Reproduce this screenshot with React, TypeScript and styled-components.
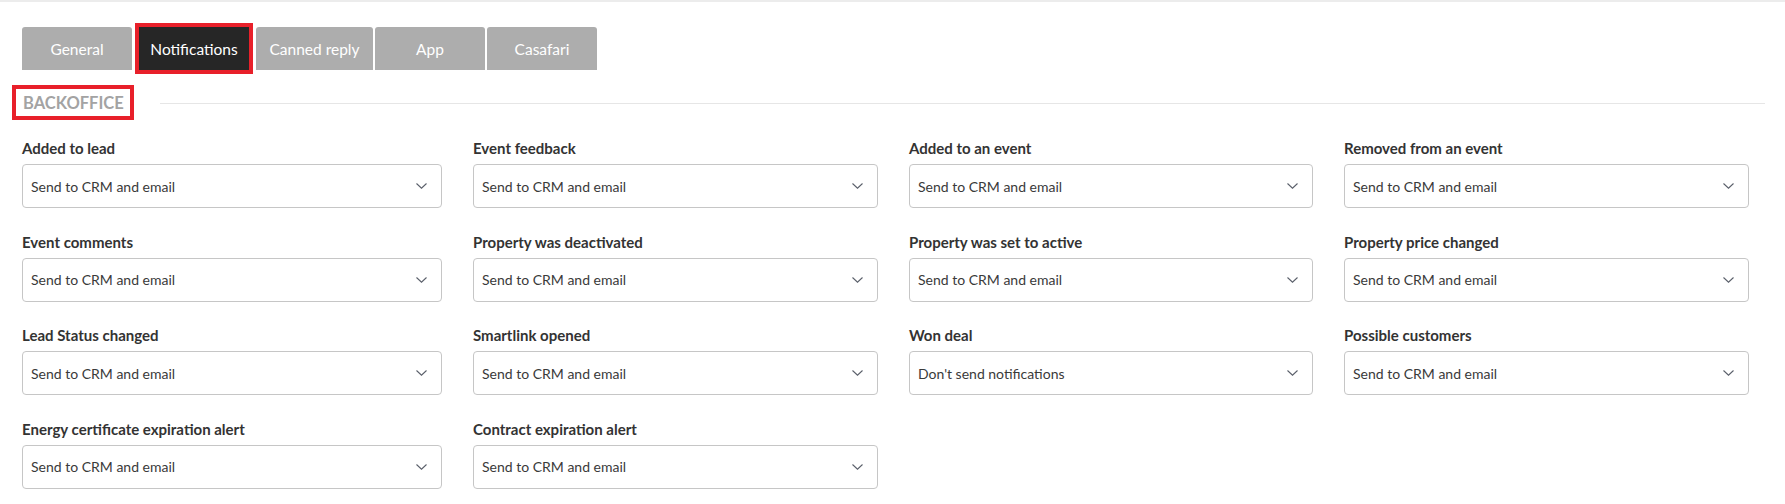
import React, {FC} from 'react';
import styled, {createGlobalStyle} from 'styled-components';

const GlobalStyle = createGlobalStyle`
  html, body {
    margin: 0;
    padding: 0;
    background: #fff;
    font-family: Lato, "Open Sans", "Liberation Sans", sans-serif;
  }
  * {
    box-sizing: border-box;
  }
`

const Page = styled.div`
  width: 100%;
  min-height: 504px;
  border-top: 2px solid #ececec;
  padding: 0 20px 0 22px;
`

const Tabs = styled.nav`
  display: flex;
  align-items: center;
  height: 43px;
  margin-top: 25px;
`

const Tab = styled.button<{ $active?: boolean; $width: number }>`
  width: ${p => p.$width + (p.$active ? 8 : 0)}px;
  height: ${p => (p.$active ? '51px' : '43px')};
  padding: 0;
  margin-right: ${p => (p.$active ? '3px' : '2px')};
  margin-left: ${p => (p.$active ? '1px' : '0')};
  border: ${p => (p.$active ? '4px solid #e8202a' : 'none')};
  border-radius: ${p => (p.$active ? '0' : '3px 3px 0 0')};
  background: ${p => (p.$active ? '#262626' : '#adadad')};
  color: #fff;
  font-family: inherit;
  font-size: 15.5px;
  cursor: pointer;
`

const SectionHead = styled.div`
  display: flex;
  align-items: center;
  margin-top: 15px;
`

const SectionTitle = styled.h3`
  margin: 0 0 0 -10px;
  height: 35px;
  padding: 0 6px 0 7px;
  display: flex;
  align-items: center;
  border: 4px solid #e8202a;
  color: #a3a3a3;
  font-size: 16.5px;
  font-weight: 700;
`

const Divider = styled.div`
  flex: 1;
  height: 1px;
  margin: 2px 0 0 26px;
  background: #e6e6e6;
`

const Grid = styled.div`
  display: grid;
  grid-template-columns: 420px 405px 404px 405px;
  column-gap: 31px;
  row-gap: 23.5px;
  margin-top: 18px;
`

const Field = styled.div`
  display: flex;
  flex-direction: column;
`

const Label = styled.label`
  font-size: 15px;
  font-weight: 700;
  line-height: 20px;
  color: #333;
  margin-bottom: 6px;
`

const Select = styled.div`
  height: 44px;
  display: flex;
  align-items: center;
  justify-content: space-between;
  padding: 0 14px 0 8px;
  border: 1px solid #c6c6c6;
  border-radius: 4px;
  font-size: 14px;
  color: #3a3a3a;
  background: #fff;
  cursor: pointer;
`

const Chevron: FC = () => (
  <svg width="11" height="6" viewBox="0 0 11 6">
    <polyline points="0.5,0.5 5.5,5.2 10.5,0.5" fill="none" stroke="#5a5f6a" strokeWidth="1.1" />
  </svg>
)

const SEND = 'Send to CRM and email';

const fields = [
  {label: 'Added to lead', value: SEND},
  {label: 'Event feedback', value: SEND},
  {label: 'Added to an event', value: SEND},
  {label: 'Removed from an event', value: SEND},
  {label: 'Event comments', value: SEND},
  {label: 'Property was deactivated', value: SEND},
  {label: 'Property was set to active', value: SEND},
  {label: 'Property price changed', value: SEND},
  {label: 'Lead Status changed', value: SEND},
  {label: 'Smartlink opened', value: SEND},
  {label: 'Won deal', value: "Don't send notifications"},
  {label: 'Possible customers', value: SEND},
  {label: 'Energy certificate expiration alert', value: SEND},
  {label: 'Contract expiration alert', value: SEND},
];

const tabs = [
  {name: 'General', width: 110},
  {name: 'Notifications', width: 110},
  {name: 'Canned reply', width: 117},
  {name: 'App', width: 110},
  {name: 'Casafari', width: 110},
];

const App: FC = () => {
  return (
    <>
      <GlobalStyle />
      <Page>
        <Tabs>
          {tabs.map(t => (
            <Tab key={t.name} $width={t.width} $active={t.name === 'Notifications'}>{t.name}</Tab>
          ))}
        </Tabs>
        <SectionHead>
          <SectionTitle>BACKOFFICE</SectionTitle>
          <Divider />
        </SectionHead>
        <Grid>
          {fields.map(f => (
            <Field key={f.label}>
              <Label>{f.label}</Label>
              <Select>
                <span>{f.value}</span>
                <Chevron />
              </Select>
            </Field>
          ))}
        </Grid>
      </Page>
    </>
  )
}

export default App
